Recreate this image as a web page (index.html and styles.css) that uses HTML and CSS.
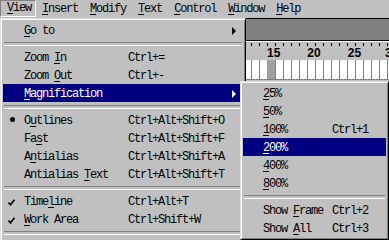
FILE: index.html
```html
<!DOCTYPE html>
<html lang="en">
<head>
<meta charset="UTF-8" />
<title>View menu</title>
<link rel="stylesheet" href="styles.css">
</head>
<body>
  <div class="app">
    <div class="menubar">
      <span class="mb-item open"><u>V</u>iew</span>
      <span class="mb-item"><u>I</u>nsert</span>
      <span class="mb-item"><u>M</u>odify</span>
      <span class="mb-item"><u>T</u>ext</span>
      <span class="mb-item"><u>C</u>ontrol</span>
      <span class="mb-item"><u>W</u>indow</span>
      <span class="mb-item"><u>H</u>elp</span>
    </div>

    <div class="workspace">
      <div class="stage-strip"></div>
      <div class="ruler">
        <div class="ticks"></div>
        <div class="nums">
          <span>15</span><span>20</span><span>25</span><span class="last">3</span>
        </div>
      </div>
      <div class="frames"></div>
    </div>

    <!-- View menu -->
    <div class="menu main-menu">
      <div class="mi"><span class="mark"></span><span class="label"><u>G</u>o to</span><span class="key"></span><span class="arrow"></span></div>
      <div class="sep"></div>
      <div class="mi"><span class="mark"></span><span class="label">Zoom <u>I</u>n</span><span class="key">Ctrl+=</span></div>
      <div class="mi"><span class="mark"></span><span class="label">Zoom <u>O</u>ut</span><span class="key">Ctrl+-</span></div>
      <div class="mi active"><span class="mark"></span><span class="label"><u>M</u>agnification</span><span class="key"></span><span class="arrow"></span></div>
      <div class="sep"></div>
      <div class="mi"><span class="mark"><i class="dot"></i></span><span class="label">O<u>u</u>tlines</span><span class="key">Ctrl+Alt+Shift+O</span></div>
      <div class="mi"><span class="mark"></span><span class="label">Fa<u>s</u>t</span><span class="key">Ctrl+Alt+Shift+F</span></div>
      <div class="mi"><span class="mark"></span><span class="label">A<u>n</u>tialias</span><span class="key">Ctrl+Alt+Shift+A</span></div>
      <div class="mi"><span class="mark"></span><span class="label">Antialias <u>T</u>ext</span><span class="key">Ctrl+Alt+Shift+T</span></div>
      <div class="sep"></div>
      <div class="mi"><span class="mark"><svg width="7" height="7" viewBox="0 0 7 7"><path d="M0.5 3.5 L2.5 5.8 L6.5 0.8" fill="none" stroke="#000" stroke-width="1.7"/></svg></span><span class="label">Time<u>l</u>ine</span><span class="key">Ctrl+Alt+T</span></div>
      <div class="mi"><span class="mark"><svg width="7" height="7" viewBox="0 0 7 7"><path d="M0.5 3.5 L2.5 5.8 L6.5 0.8" fill="none" stroke="#000" stroke-width="1.7"/></svg></span><span class="label"><u>W</u>ork Area</span><span class="key">Ctrl+Shift+W</span></div>
      <div class="sep"></div>
      <div class="mi"></div>
    </div>

    <!-- Magnification submenu -->
    <div class="menu sub-menu">
      <div class="mi"><span class="label"><u>2</u>5%</span><span class="key"></span></div>
      <div class="mi"><span class="label"><u>5</u>0%</span><span class="key"></span></div>
      <div class="mi"><span class="label"><u>1</u>00%</span><span class="key">Ctrl+1</span></div>
      <div class="mi active"><span class="label"><u>2</u>00%</span><span class="key"></span></div>
      <div class="mi"><span class="label"><u>4</u>00%</span><span class="key"></span></div>
      <div class="mi"><span class="label"><u>8</u>00%</span><span class="key"></span></div>
      <div class="sep"></div>
      <div class="mi"><span class="label">Show <u>F</u>rame</span><span class="key">Ctrl+2</span></div>
      <div class="mi"><span class="label">Show <u>A</u>ll</span><span class="key">Ctrl+3</span></div>
    </div>
  </div>
</body>
</html>
```

FILE: styles.css
```css
/* Reset */
* {
  box-sizing: border-box;
  margin: 0;
  padding: 0;
}
body {
  background: #c0c0c0;
  color: #000;
  font-family: "Liberation Mono", "DejaVu Sans Mono", monospace;
  font-size: 12px;
  letter-spacing: -1.2px;
}
u {
  text-underline-offset: 2px;
}
.app {
  position: relative;
  width: 389px;
  height: 240px;
  overflow: hidden;
}

/* Menu bar */
.menubar {
  display: flex;
  height: 18px;
  background: #c0c0c0;
}
.mb-item {
  height: 17px;
  line-height: 17px;
  padding: 1px 6px 0;
  white-space: nowrap;
}
.mb-item.open {
  border: 1px solid;
  border-color: #808080 #fff #fff #808080;
  line-height: 15px;
  padding: 0 4px 0 6px;
}

/* Background: stage + timeline */
.workspace {
  display: flex;
  flex-direction: column;
}
.stage-strip {
  height: 23px;
  background: #808080;
  border-top: 1px solid #000;
  border-bottom: 1px solid #000;
}
.ruler {
  height: 19px;
  background: #c0c0c0;
  border-top: 1px solid #fff;
  display: flex;
  flex-direction: column;
}
.ticks {
  height: 3px;
  margin-top: 1px;
  background: repeating-linear-gradient(90deg, #000 0 1px, transparent 1px 8px);
  background-position: 3px 0;
}
.nums {
  display: flex;
  gap: 27px;
  padding-left: 267px;
  font-family: "Liberation Sans", Arial, sans-serif;
  font-weight: 700;
  font-size: 12px;
  letter-spacing: 0;
  line-height: 14px;
}
.nums .last {
  margin-left: -3px;
}
.frames {
  height: 20px;
  background:
    repeating-linear-gradient(90deg, transparent 0 264px, #a0a0a0 264px 272px, transparent 272px 304px),
    repeating-linear-gradient(90deg, #808080 0 1px, #fff 1px 8px);
  background-position: 3px 0;
  border-bottom: 1px solid #808080;
}

/* Menus */
.menu {
  position: absolute;
  background: #c0c0c0;
  border: 1px solid;
  border-color: #dfdfdf #000 #000 #dfdfdf;
  box-shadow: inset 1px 1px #fff, inset -1px -1px #808080;
  padding: 2px;
  display: flex;
  flex-direction: column;
}
.main-menu {
  left: 0;
  top: 18px;
  width: 246px;
  z-index: 1;
}
.sub-menu {
  left: 240px;
  top: 81px;
  width: 149px;
  height: 159px;
  z-index: 2;
}
.mi {
  display: grid;
  align-items: center;
  height: 18px;
  padding-top: 2px;
  line-height: 16px;
  white-space: nowrap;
}
.main-menu .mi {
  grid-template-columns: 21px 104px 1fr 11px;
}
.sub-menu .mi {
  grid-template-columns: 20px 69px 1fr;
}
.sub-menu .label {
  grid-column: 2;
}
.mi.active {
  background: #000080;
  color: #fff;
}
.mark {
  display: flex;
  align-items: center;
  justify-content: flex-start;
  padding-left: 5px;
  height: 16px;
}
.dot {
  display: block;
  width: 5px;
  height: 5px;
  margin-left: 2px;
  margin-top: -3px;
  border-radius: 50%;
  background: #000;
}
.arrow {
  width: 0;
  height: 0;
  border-left: 4px solid currentColor;
  border-top: 4px solid transparent;
  border-bottom: 4px solid transparent;
}
.sep {
  height: 9px;
  margin: 0 1px;
  padding-top: 3px;
}
.sep::before {
  content: "";
  display: block;
  height: 2px;
  border-top: 1px solid #808080;
  border-bottom: 1px solid #fff;
}
```
